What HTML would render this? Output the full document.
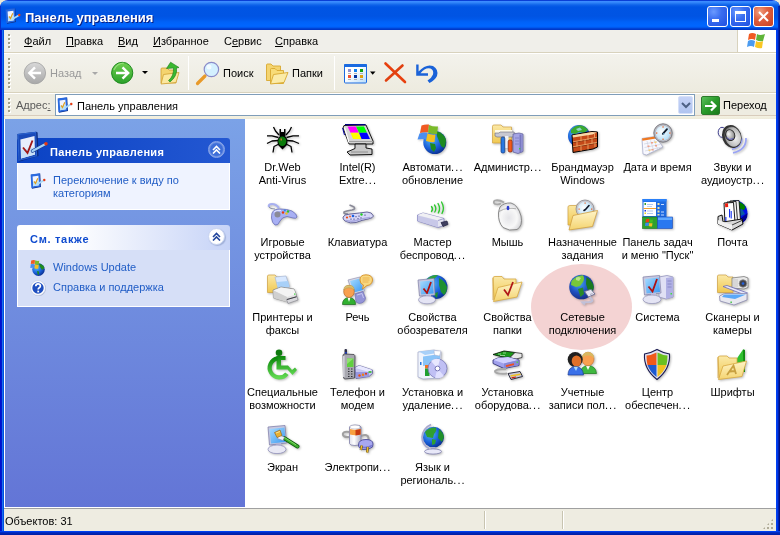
<!DOCTYPE html>
<html><head><meta charset="utf-8">
<style>
*{margin:0;padding:0;box-sizing:border-box}
html,body{width:780px;height:535px;overflow:hidden;background:#fff}
body{position:relative;font-family:"Liberation Sans",sans-serif;font-size:11px;color:#000;line-height:13px}
.a{position:absolute}
.txt{white-space:nowrap;will-change:transform}
.ic{filter:drop-shadow(1px 1px 0.8px rgba(0,0,0,0.28))}
.lab{will-change:transform;width:75px;text-align:center;white-space:nowrap;line-height:13px}
.u{text-decoration:underline}
.dots{letter-spacing:1.1px;margin-right:-1.1px}
#corner{left:0;top:0;width:780px;height:12px;background:#ECE9D8}
#frame{left:0;top:0;width:780px;height:535px;border-radius:8px 8px 0 0;
 background:linear-gradient(90deg,#0010D0 0,#0010D0 1px,#0018CC 1px,#0018CC 2px,#1A70F0 2px,#1A70F0 3px,#0050E0 3px,#0050E0 4px,#fff 4px,#fff 776px,#0040F0 776px,#0040F0 777px,#0038E8 777px,#0038E8 778px,#0020B0 778px,#0020B0 779px,#001080 779px)}
#title{left:0;top:0;width:780px;height:30px;border-radius:8px 8px 0 0;
 background:linear-gradient(180deg,#0A3FD6 0,#0A3FD6 1px,#3B8CFF 1px,#3A8BFF 2px,#2A7FF5 3px,#0E62EA 5px,#0055E4 7px,#0054E3 16px,#0058EA 19px,#0062F8 22px,#0066FF 26px,#0060F8 27px,#0050E4 28px,#0038C8 29px,#0038C8 30px)}
#ttext{will-change:transform;left:25px;top:10px;font-size:13px;font-weight:bold;color:#fff;text-shadow:1px 1px 0 #0A1E80;line-height:16px;white-space:nowrap}
.tb{top:6px;width:21px;height:21px;border:1px solid #fff;border-radius:3px;
 background:radial-gradient(circle at 30% 25%,#6A9AFF 0,#3A6EF0 40%,#1F4FE0 100%)}
#menubar{left:4px;top:30px;width:772px;height:23px;background:#F0EFEA;border-bottom:1px solid #D8D2BD}
#toolbar{left:4px;top:53px;width:772px;height:40px;background:linear-gradient(180deg,#F3F2EC,#EDEBDF);border-top:1px solid #fff;border-bottom:1px solid #D8D2BD}
#addrbar{left:4px;top:93px;width:772px;height:26px;background:linear-gradient(180deg,#fff 0,#fff 1px,#EEECE1 1px,#EEECE1 22px,#D8CCBC 22px,#D8CCBC 23px,#F4F1E2 23px,#EFECDA 26px)}
#content{left:4px;top:119px;width:772px;height:389px;background:#fff}
#leftpane{left:5px;top:119px;width:240px;height:388px;background:linear-gradient(180deg,#7BA2E7,#6375D6)}
#status{left:4px;top:508px;width:772px;height:23px;background:#EEECE1;border-top:1px solid #A0A0A0}
#bottom{left:0;top:531px;width:780px;height:4px;background:linear-gradient(180deg,#0040F0 0,#0040F0 1px,#0030D0 1px,#0020A8 3px)}
.grip{width:3px;background:linear-gradient(180deg,#A09E88 0,#A09E88 2px,transparent 2px) 0 0/2px 4px repeat-y,linear-gradient(180deg,#fff 0,#fff 2px,transparent 2px) 1px 1px/2px 4px repeat-y}
.sep{width:1px;background:#D5D0BC;border-right:1px solid #fff}
.box{left:17px;width:213px}
.hdr1{background:linear-gradient(90deg,#0A42C4,#2458D2);border-radius:3px 3px 0 0}
.body1{background:#EFF3FF;border:1px solid #fff;border-top:0}
.hdr2{background:linear-gradient(90deg,#fff 0,#fff 25%,#C6D3F7 100%);border-radius:3px 3px 0 0}
.body2{background:#D6DFF7;border:1px solid #fff;border-top:0}
.link{color:#215DC6;white-space:nowrap;will-change:transform}
.chev{width:17px;height:17px;border-radius:50%}
</style></head><body>
<svg width="0" height="0" style="position:absolute">
<defs>
<linearGradient id="gYel" x1="0" y1="0" x2="0" y2="1"><stop offset="0" stop-color="#FBE9A8"/><stop offset="1" stop-color="#F0C850"/></linearGradient>
<linearGradient id="gYel2" x1="0" y1="0" x2="0" y2="1"><stop offset="0" stop-color="#FFF4C8"/><stop offset="1" stop-color="#F4D470"/></linearGradient>
<radialGradient id="gGlobe" cx="0.35" cy="0.35" r="0.7"><stop offset="0" stop-color="#50B8F8"/><stop offset="0.6" stop-color="#1A5ED8"/><stop offset="1" stop-color="#0A3090"/></radialGradient>
<linearGradient id="gScreen" x1="0" y1="0" x2="1" y2="1"><stop offset="0" stop-color="#A8DCFF"/><stop offset="1" stop-color="#3A98F0"/></linearGradient>
<linearGradient id="gLav" x1="0" y1="0" x2="0" y2="1"><stop offset="0" stop-color="#E8E8FF"/><stop offset="1" stop-color="#9898E0"/></linearGradient>
<linearGradient id="gGray" x1="0" y1="0" x2="1" y2="1"><stop offset="0" stop-color="#F8F8F8"/><stop offset="1" stop-color="#B8B8C0"/></linearGradient>
<linearGradient id="gGreen" x1="0" y1="0" x2="0" y2="1"><stop offset="0" stop-color="#0E8A0E"/><stop offset="1" stop-color="#60D850"/></linearGradient>
<radialGradient id="gClock" cx="0.4" cy="0.4" r="0.6"><stop offset="0" stop-color="#FFFFFF"/><stop offset="1" stop-color="#B8E0F8"/></radialGradient>
<radialGradient id="gCone" cx="0.6" cy="0.6" r="0.6"><stop offset="0" stop-color="#F4F4F4"/><stop offset="0.8" stop-color="#B8B8B8"/><stop offset="1" stop-color="#787878"/></radialGradient>
<radialGradient id="gDome" cx="0.35" cy="0.35" r="0.7"><stop offset="0" stop-color="#F8F8F8"/><stop offset="1" stop-color="#8A8A8A"/></radialGradient>
<radialGradient id="gGlobe2" cx="0.4" cy="0.35" r="0.7"><stop offset="0" stop-color="#40A8F0"/><stop offset="0.55" stop-color="#2050C0"/><stop offset="1" stop-color="#182C80"/></radialGradient>
<linearGradient id="gBatt" x1="0" y1="0" x2="1" y2="0"><stop offset="0" stop-color="#E0E0EC"/><stop offset="0.4" stop-color="#FFFFFF"/><stop offset="1" stop-color="#B0B0C4"/></linearGradient>
<radialGradient id="gMouse" cx="0.45" cy="0.55" r="0.6"><stop offset="0" stop-color="#E4E4E8"/><stop offset="0.6" stop-color="#F8F8F8"/><stop offset="1" stop-color="#D0D0D4"/></radialGradient>
</defs></svg>
<div id="corner" class="a"></div>
<div id="frame" class="a"></div>
<div id="title" class="a"></div>
<div class="a" style="left:0;top:6px;width:1px;height:24px;background:#0A30C8"></div>
<div class="a" style="left:778px;top:6px;width:2px;height:24px;background:linear-gradient(90deg,#0030C8,#001A90)"></div>
<svg class="a" style="left:5px;top:8px;overflow:visible" width="16" height="16" viewBox="0 0 16 16">
<path d="M1 1.8 L10.2 0.5 L11 14 L2 15.8z" fill="#0A2A80"/>
<path d="M0.6 1.5 L9.8 0.3 L10.4 13.6 L1.4 15.2z" fill="#2A6AE0"/>
<path d="M2.6 3.6 L8.4 2.8 L8.9 12.2 L3.2 13.2z" fill="#F0F4FF"/>
<path d="M3 9 L8.8 8 L8.9 12.2 L3.2 13.2z" fill="#B8E0F8"/>
<path d="M4 8.3 L5.5 10.6 L7.8 5.2" stroke="#E0A020" stroke-width="1.2" fill="none"/>
<path d="M8.5 10.5 L14 7.2" stroke="#A8D8F8" stroke-width="1.8" stroke-linecap="round"/>
<circle cx="14.3" cy="7" r="1.2" fill="#E83A10"/>
</svg>
<div id="ttext" class="a">Панель управления</div>
<div class="a tb" style="left:707px"><div class="a" style="left:4px;top:12px;width:7px;height:3px;background:#fff"></div></div>
<div class="a tb" style="left:730px"><div class="a" style="left:4px;top:4px;width:11px;height:11px;border:1px solid #fff;border-top-width:3px"></div></div>
<div class="a tb" style="left:753px;background:radial-gradient(circle at 30% 25%,#F0A080 0,#E06040 40%,#C84020 100%)">
 <svg class="a" style="left:4px;top:4px" width="11" height="11" viewBox="0 0 11 11"><path d="M1 1 L10 10 M10 1 L1 10" stroke="#fff" stroke-width="2"/></svg></div>

<div id="menubar" class="a"></div>
<div class="a grip" style="left:8px;top:34px;height:15px"></div>
<div class="a txt" style="left:24px;top:35px"><span class="u">Ф</span>айл</div>
<div class="a txt" style="left:66px;top:35px"><span class="u">П</span>равка</div>
<div class="a txt" style="left:118px;top:35px"><span class="u">В</span>ид</div>
<div class="a txt" style="left:153px;top:35px"><span class="u">И</span>збранное</div>
<div class="a txt" style="left:224px;top:35px">С<span class="u">е</span>рвис</div>
<div class="a txt" style="left:275px;top:35px"><span class="u">С</span>правка</div>
<div class="a" style="left:737px;top:30px;width:39px;height:22px;background:#fff;border-left:1px solid #D8D2BD"></div>
<svg class="a" style="left:746px;top:32px" width="22" height="18" viewBox="0 0 22 18">
<path d="M3 2 Q6 0 10 2 L9 8 Q6 6 2 8z" fill="#F05A22"/><path d="M11 2 Q14 4 19 2 L17 9 Q14 10 10 8z" fill="#5FB43A"/>
<path d="M2 9 Q5 7 9 9 L8 15 Q5 13 1 15z" fill="#4A9BF0"/><path d="M10 9 Q13 11 17 9 L16 16 Q13 17 9 15z" fill="#F9C623"/></svg>

<div id="toolbar" class="a"></div>
<div class="a grip" style="left:8px;top:58px;height:31px"></div>
<svg class="a" style="left:20px;top:58px" width="30" height="30" viewBox="20 58 30 30">
<defs><linearGradient id="gBack" x1="0" y1="0" x2="0" y2="1"><stop offset="0" stop-color="#D8D8D8"/><stop offset="1" stop-color="#A8A8A8"/></linearGradient>
<linearGradient id="gFwd" x1="0" y1="0" x2="0" y2="1"><stop offset="0" stop-color="#70D050"/><stop offset="1" stop-color="#2AA02A"/></linearGradient></defs>
<circle cx="34.9" cy="73.1" r="10.7" fill="url(#gBack)" stroke="#A0A0A0" stroke-width="0.8"/>
<path d="M41 73 H29.5 M35 67.3 L29.3 73 L35 78.7" stroke="#fff" stroke-width="2.4" fill="none" stroke-linejoin="miter"/></svg>
<div class="a txt" style="left:50px;top:67px;color:#9A9A9A">Назад</div>
<div class="a" style="left:92px;top:72px;width:0;height:0;border-left:3px solid transparent;border-right:3px solid transparent;border-top:3px solid #A8A8A8"></div>
<svg class="a" style="left:108px;top:58px" width="30" height="30" viewBox="108 58 30 30">
<circle cx="122.2" cy="72.9" r="10.6" fill="url(#gFwd)" stroke="#1E8A1E" stroke-width="1"/>
<path d="M114 70 Q117 63 124 63" stroke="#A8E890" stroke-width="1.2" fill="none" opacity="0.7"/>
<path d="M116 73 H128 M122.5 67.3 L128.2 73 L122.5 78.7" stroke="#fff" stroke-width="2.4" fill="none"/></svg>
<div class="a" style="left:142px;top:71px;width:0;height:0;border-left:3px solid transparent;border-right:3px solid transparent;border-top:3px solid #000"></div>
<svg class="a" style="left:156px;top:58px" width="30" height="30" viewBox="156 58 30 30">
<path d="M161 69 Q161 68 162 68 H167 L169 70 H176 V83 H161z" fill="#F4D470" stroke="#D0A030" stroke-width="0.8"/>
<path d="M163.5 74.5 L179 72.5 L176 82.5 L161 84z" fill="#FBE8A0" stroke="#D0A030" stroke-width="0.8"/>
<path d="M168.5 80.5 Q174 76 173.5 68 L166.5 68.5 L170.6 62.2 L179 67.5 L176.5 68 Q177.5 76 170 82z" fill="#3AB830" stroke="#1A7A1A" stroke-width="0.6"/></svg>
<div class="a sep" style="left:188px;top:56px;height:34px"></div>
<svg class="a" style="left:194px;top:58px" width="30" height="30" viewBox="194 58 30 30">
<path d="M197.5 83.5 L205 76" stroke="#E89A2A" stroke-width="3.2" stroke-linecap="round"/>
<circle cx="211.4" cy="69.5" r="7.2" fill="#D4F0FF" stroke="#8A8AC8" stroke-width="1.2"/>
<circle cx="209" cy="67" r="2.5" fill="#fff" opacity="0.7"/></svg>
<div class="a txt" style="left:223px;top:67px">Поиск</div>
<svg class="a" style="left:262px;top:58px" width="30" height="30" viewBox="262 58 30 30">
<path d="M266.5 65 Q266.5 64 267.5 64 H271 L273 66 H280.5 V80.5 H266.5z" fill="#F4D470" stroke="#D8A830" stroke-width="0.9"/>
<path d="M270.5 69.5 Q270.5 68.5 271.5 68.5 H275 L277 70.5 H283.5 V83.5 H270.5z" fill="#F8DC78" stroke="#D8A830" stroke-width="0.9"/>
<path d="M273.5 74.5 L288 72.5 L284 82.5 L270.5 84z" fill="#FBEBA8" stroke="#D8A830" stroke-width="0.9"/></svg>
<div class="a txt" style="left:292px;top:67px">Папки</div>
<div class="a sep" style="left:334px;top:56px;height:34px"></div>
<svg class="a" style="left:340px;top:58px" width="40" height="30" viewBox="340 58 40 30">
<defs><linearGradient id="gView" x1="0" y1="0" x2="1" y2="1"><stop offset="0.4" stop-color="#fff"/><stop offset="1" stop-color="#B8DCFA"/></linearGradient></defs>
<rect x="344.5" y="64.5" width="22" height="18.5" rx="1" fill="url(#gView)" stroke="#1A6AE0" stroke-width="1"/>
<rect x="344" y="64" width="23" height="3" rx="1" fill="#1A6AE0"/>
<rect x="348" y="69" width="3" height="3" fill="#9090D0"/><rect x="354" y="69" width="3" height="3" fill="#1080F0"/><rect x="360" y="69" width="3" height="3" fill="#10A010"/>
<rect x="348" y="75" width="3" height="3" fill="#F05030"/><rect x="354" y="75" width="3" height="3" fill="#0030A0"/><rect x="360" y="75" width="3" height="3" fill="#E0A010"/>
<path d="M348 73.5 h3 M354 73.5 h3 M360 73.5 h3 M348 79.5 h3 M354 79.5 h3 M360 79.5 h3" stroke="#A0A0A0" stroke-width="0.8"/>
<path d="M370 71.5 H375.5 L372.7 74.8z" fill="#000"/></svg>
<svg class="a" style="left:380px;top:58px" width="60" height="30" viewBox="380 58 60 30">
<path d="M385.5 63.5 L405 82" stroke="#E8400E" stroke-width="2.6" stroke-linecap="round"/>
<path d="M402.5 65.5 L386 80.5" stroke="#E04010" stroke-width="2.6" stroke-linecap="round"/>
<path d="M416.2 64.5 L418.6 64.5 L418.6 71.5 Q426 63.5 433 66 Q439 69.5 437 76 Q435 80 429.5 83 L427.5 80.5 Q432 77.5 433 74.5 Q434 70 430.5 68.5 Q425.5 67 420.5 73.2 L428 73.2 L428 75.8 L416.2 75.8z" fill="#1A62D8"/></svg>

<div id="addrbar" class="a"></div>
<div class="a grip" style="left:8px;top:98px;height:15px"></div>
<div class="a txt" style="left:16px;top:99px;color:#5A5A5A">Адрес<span class="u">:</span></div>
<div class="a" style="left:55px;top:94px;width:640px;height:22px;background:#fff;border:1px solid #7F9DB9"></div>
<svg class="a" style="left:57px;top:97px;overflow:visible" width="16" height="16" viewBox="0 0 16 16">
<path d="M1 1.8 L10.2 0.5 L11 14 L2 15.8z" fill="#0A2A80"/>
<path d="M0.6 1.5 L9.8 0.3 L10.4 13.6 L1.4 15.2z" fill="#2A6AE0"/>
<path d="M2.6 3.6 L8.4 2.8 L8.9 12.2 L3.2 13.2z" fill="#F0F4FF"/>
<path d="M3 9 L8.8 8 L8.9 12.2 L3.2 13.2z" fill="#B8E0F8"/>
<path d="M4 8.3 L5.5 10.6 L7.8 5.2" stroke="#E0A020" stroke-width="1.2" fill="none"/>
<path d="M8.5 10.5 L14 7.2" stroke="#A8D8F8" stroke-width="1.8" stroke-linecap="round"/>
<circle cx="14.3" cy="7" r="1.2" fill="#E83A10"/>
</svg>
<div class="a txt" style="left:77px;top:100px">Панель управления</div>
<div class="a" style="left:678px;top:96px;width:15px;height:18px;border-radius:2px;background:linear-gradient(180deg,#C6D3F7,#B0C4F0);border:1px solid #D6E0F8">
<svg class="a" style="left:2px;top:5px" width="10" height="7" viewBox="0 0 10 7"><path d="M1 1 L5 5 L9 1" stroke="#4D6185" stroke-width="2" fill="none"/></svg></div>
<div class="a" style="left:701px;top:96px;width:19px;height:19px;border-radius:2px;background:linear-gradient(135deg,#5ABF5A,#2A9A2A 50%,#1A7A1A);border:1px solid #2A7A2A">
<svg class="a" style="left:2px;top:2px" width="14" height="14" viewBox="0 0 14 14"><path d="M1 7 H11 M7 2.5 L11.5 7 L7 11.5" stroke="#fff" stroke-width="2.2" fill="none"/></svg></div>
<div class="a txt" style="left:723px;top:99px">Переход</div>

<div id="content" class="a"></div>
<div id="leftpane" class="a"></div>

<div class="a box hdr1" style="top:138px;height:25px"></div>
<div class="a box body1" style="top:163px;height:47px"></div>
<svg class="a" style="left:14px;top:128px;overflow:visible" width="36" height="36" viewBox="0 0 36 36">
<path d="M3.4 6 L22.2 3.7 L23.6 4.5 L24.5 28 L5.5 33.5 L4.4 33z" fill="#0A2A80"/>
<path d="M3.4 6 L22.2 3.7 L23.2 28.3 L4.4 33z" fill="#2A62D0"/>
<path d="M4.5 7 L21.5 5 L22.2 27.5 L5.3 31.8z" fill="#1A4AB8"/>
<path d="M6.4 11.4 L20.5 8 L21 26.5 L7 30.5z" fill="#E8EEFC"/>
<path d="M7 22 L21 19 L21 26.5 L7 30.5z" fill="#C8E0F8"/>
<path d="M9 19.5 L13.5 25 L18.5 12.5" stroke="#A01818" stroke-width="1.9" fill="none"/>
<path d="M18.5 23 L31.5 16" stroke="#1A3A90" stroke-width="3.6" stroke-linecap="round"/>
<path d="M18.5 23 L31.5 16" stroke="#A0D0F8" stroke-width="2.2" stroke-linecap="round"/>
<circle cx="32" cy="15.7" r="1.8" fill="#E83A10"/>
</svg>
<div class="a txt" style="left:50px;top:146px;color:#fff;font-weight:bold;letter-spacing:0.33px">Панель управления</div>
<div class="a chev" style="left:208px;top:141px;background:radial-gradient(circle,#3E6ED8 55%,#7A9BE8 70%,#5A7ED8 100%);border:1px solid #8AA6E8">
<svg class="a" style="left:3px;top:3px" width="9" height="9" viewBox="0 0 9 9"><path d="M1 5 L4.5 1.5 L8 5 M1 8.5 L4.5 5 L8 8.5" stroke="#fff" stroke-width="1.6" fill="none"/></svg></div>
<svg class="a" style="left:30px;top:173px;overflow:visible" width="16" height="16" viewBox="0 0 16 16">
<path d="M1 1.8 L10.2 0.5 L11 14 L2 15.8z" fill="#0A2A80"/>
<path d="M0.6 1.5 L9.8 0.3 L10.4 13.6 L1.4 15.2z" fill="#2A6AE0"/>
<path d="M2.6 3.6 L8.4 2.8 L8.9 12.2 L3.2 13.2z" fill="#F0F4FF"/>
<path d="M3 9 L8.8 8 L8.9 12.2 L3.2 13.2z" fill="#B8E0F8"/>
<path d="M4 8.3 L5.5 10.6 L7.8 5.2" stroke="#E0A020" stroke-width="1.2" fill="none"/>
<path d="M8.5 10.5 L14 7.2" stroke="#A8D8F8" stroke-width="1.8" stroke-linecap="round"/>
<circle cx="14.3" cy="7" r="1.2" fill="#E83A10"/>
</svg>
<div class="a link" style="left:53px;top:174px">Переключение к виду по<br>категориям</div>

<div class="a box hdr2" style="top:225px;height:25px"></div>
<div class="a box body2" style="top:250px;height:57px"></div>
<div class="a txt" style="left:30px;top:233px;color:#0F4BCF;font-weight:bold;letter-spacing:0.7px">См. также</div>
<div class="a chev" style="left:208px;top:228px;background:#fff;border:1px solid #C8D4F0;box-shadow:1px 1px 1px #A0B0D8">
<svg class="a" style="left:3px;top:3px" width="9" height="9" viewBox="0 0 9 9"><path d="M1 5 L4.5 1.5 L8 5 M1 8.5 L4.5 5 L8 8.5" stroke="#21449C" stroke-width="1.6" fill="none"/></svg></div>
<svg class="a" style="left:30px;top:259px" width="17" height="18" viewBox="0 0 17 18">
<circle cx="8.5" cy="10.6" r="6.3" fill="url(#gGlobe)"/>
<path d="M9 4.6 Q13 5.5 14.5 9 L12 11 L10 8z" fill="#1E8A20"/><path d="M7 12 L9 12.5 L9 16 L7.5 15z" fill="#1E8A20"/>
<path d="M1.2 1.5 Q3 0.8 5 1.2 L4.6 5 Q2.8 4.6 0.8 5z" fill="#F05A22"/><path d="M5.2 1.3 Q7 2.2 9.2 1.8 L8.8 5.6 Q6.7 6 4.8 5.2z" fill="#7ABB2A"/>
<path d="M0.7 5.3 Q2.8 4.9 4.6 5.3 L4.2 9 Q2.4 8.6 0.3 9z" fill="#4A8EF0"/><path d="M4.8 5.5 Q6.7 6.2 8.7 5.9 L8.3 9.7 Q6.3 10 4.4 9.2z" fill="#F4C020"/></svg>
<div class="a link" style="left:53px;top:261px">Windows Update</div>
<svg class="a" style="left:30px;top:280px" width="17" height="17" viewBox="0 0 17 17">
<circle cx="8.6" cy="8.6" r="7.4" fill="#8090B0" opacity="0.5"/>
<circle cx="8" cy="8" r="7.4" fill="#fff" stroke="#C0C8E0" stroke-width="0.6"/>
<circle cx="8" cy="8" r="5.7" fill="#1E4EC0"/>
<path d="M5.8 6.2 Q5.8 3.8 8 3.8 Q10.4 3.8 10.4 6 Q10.4 7.3 9 8 Q8.2 8.5 8.2 9.5" stroke="#fff" stroke-width="1.7" fill="none"/>
<rect x="7.3" y="10.6" width="1.8" height="1.8" fill="#fff"/></svg>
<div class="a link" style="left:53px;top:281px">Справка и поддержка</div>

<div class="a" style="left:531px;top:264px;width:101px;height:86px;border-radius:50%;background:#F4D3D3"></div>
<svg class="a ic" style="left:267px;top:124px;overflow:visible" width="32" height="32" viewBox="0 0 32 32">
<g stroke="#000" stroke-width="1.3" fill="none" stroke-linejoin="round">
<path d="M12 11 L8.5 7 L6.5 3"/><path d="M19 11 L22.5 7 L24.5 3"/>
<path d="M11.5 13.5 L5 11.8 L0 11.8"/><path d="M19.5 13.5 L26 11.8 L32 11.8"/>
<path d="M11.5 16.5 L5 17 L0 19.5"/><path d="M19.5 16.5 L26 17 L32 19.5"/>
<path d="M12 20 L7 22.5 L6 28.5"/><path d="M19 20 L24 22.5 L25 28.5"/>
</g>
<path d="M12.5 5 h1.5 v3 h3 v-3 h1.5 v7.5 h-6z" fill="#000"/>
<path d="M15.5 11.5 Q20.5 12 20.5 18 L20 21 L15.5 25.5 L11 21 L10.5 18 Q10.5 12 15.5 11.5z" fill="#000"/>
<ellipse cx="15.3" cy="17.3" rx="4" ry="4.8" fill="#0A7A0A"/>
<rect x="13.5" y="14.5" width="1.5" height="2" fill="#C07030"/>
</svg>
<div class="a lab" style="left:245px;top:161px">Dr.Web<br>Anti-Virus</div>
<svg class="a ic" style="left:342px;top:124px;overflow:visible" width="32" height="32" viewBox="0 0 32 32">
<path d="M2 1.5 L24 1 L31 17 L31 20 L7 20 L1 4z" fill="#D4D4D4" stroke="#000" stroke-width="0.9"/>
<path d="M3 0.6 H23.5" stroke="#000080" stroke-width="1.2"/>
<path d="M0.6 4 L2.5 11" stroke="#0000A0" stroke-width="1"/>
<path d="M2.5 3.5 L7 18.5" stroke="#fff" stroke-width="1.2"/>
<path d="M5.5 2.5 L14 2.5 L17 8.7 L8.5 8.7z" fill="#FF00FF"/>
<path d="M14 2.5 L22 2.5 L25 8.7 L17 8.7z" fill="#00FF00"/>
<path d="M8.5 8.7 L17 8.7 L19.5 15 L11 15z" fill="#FFFF00"/>
<path d="M17 8.7 L25 8.7 L28 15 L19.5 15z" fill="#0000FF"/>
<path d="M7 17.5 H31" stroke="#A0A0A0" stroke-width="1"/>
<path d="M13 20 L24 20 L24 24 L30 25 L30 30.5 L8 31 L5 28 L13 24.5z" fill="#C8C8C8" stroke="#000" stroke-width="0.9"/>
<path d="M9 28 H26" stroke="#808080" stroke-width="0.8"/>
</svg>
<div class="a lab" style="left:320px;top:161px">Intel(R)<br>Extre<span class="dots">...</span></div>
<svg class="a ic" style="left:417px;top:124px;overflow:visible" width="32" height="32" viewBox="0 0 32 32">
<circle cx="17.8" cy="18.5" r="11.5" fill="url(#gGlobe)"/>
<path d="M20 7.5 Q27 9 29 16 Q29 21 27 24 L24 22 L22 17 L20 12z" fill="#1E8A20"/>
<path d="M13 19 L18 20 L19 24 L17 28 L14 25z" fill="#1E8A20"/>
<path d="M4.5 1.5 Q8 0 12 0.5 L11 8.3 Q7 7.8 3 9z" fill="#F05A22"/>
<path d="M12 1 Q16 3 21 2.5 L20 10 Q15 10.5 11 8.5z" fill="#7ABB2A"/>
<path d="M2.5 9.5 Q6 8 10.5 8.8 L9.5 15.5 Q5 14.5 0.5 15.5z" fill="#4A8EF0"/>
<path d="M10.5 9.5 Q14 11 18.5 10.5 L17.5 18 Q13 18.5 9 17z" fill="#F4C020"/>
</svg>
<div class="a lab" style="left:395px;top:161px">Автомати<span class="dots">...</span><br>обновление</div>
<svg class="a ic" style="left:492px;top:124px;overflow:visible" width="32" height="32" viewBox="0 0 32 32">
<path d="M0.5 2.2 Q0.5 1 2 1 H9 L11 3 H19.5 V19 H0.5z" fill="url(#gYel)" stroke="#D0A040" stroke-width="0.7"/>
<rect x="3" y="6" width="17" height="3" fill="#FFFBE8"/>
<path d="M3 9 H7 L8 8 H22 L23 10 L21 13 H5 L3 12z" fill="#C8C8D0" stroke="#6A6A78" stroke-width="0.6"/>
<rect x="13" y="12" width="3.5" height="12" fill="#EEF0F8"/>
<rect x="9" y="13" width="3.8" height="16" rx="1.6" fill="#2A78E0" stroke="#183A80" stroke-width="0.7"/>
<rect x="16.2" y="16" width="4" height="12" rx="1.6" fill="#F05A1A" stroke="#802010" stroke-width="0.7"/>
<path d="M21 10 L27 9 L31 10 V27.5 L26 29.5 L21 28z" fill="#A4A4E4" stroke="#5A5A98" stroke-width="0.7"/>
<path d="M28.5 10.5 V28.5" stroke="#7878C0" stroke-width="2"/>
<path d="M23 14 h4 M23 17 h4 M23 20 h4" stroke="#7A7AC0" stroke-width="0.8"/>
<rect x="27" y="24" width="1.4" height="1.4" fill="#40D040"/>
</svg>
<div class="a lab" style="left:470px;top:161px">Администр<span class="dots">...</span></div>
<svg class="a ic" style="left:567px;top:124px;overflow:visible" width="32" height="32" viewBox="0 0 32 32">
<circle cx="12" cy="12" r="11" fill="url(#gGlobe)"/>
<path d="M4 6 Q8 1.5 13 1.2 Q18 2 21 6 L17 9 L12 8 L8 10 L4 9z" fill="#3AAA30"/>
<path d="M9 5 L13 3.5 L15 6 L11 7z" fill="#A8E0F0" opacity="0.8"/>
<path d="M5 11 L25 7.5 L30.5 8 L30.5 23 L26 25 L6 28.5z" fill="#C44818" stroke="#000" stroke-width="1"/>
<path d="M5.5 11.3 L25 8 L30 8.5 L25.5 10.5 L6 13.5z" fill="#F8D8A8"/>
<g stroke="#1A0A00" stroke-width="0.8" fill="none" opacity="0.55">
<path d="M6 18.5 L25 15 L30 14"/><path d="M6 23.5 L25 20 L30 19"/></g>
<g stroke="#F4B070" stroke-width="0.8" fill="none">
<path d="M6 17.8 L25 14.3 L30 13.3"/><path d="M6 22.8 L25 19.3 L30 18.3"/>
<path d="M14 12.3 v5 M21 11 v5 M10 17.5 v5 M18 16 v5 M25 14.5 v5 M14 22 v5 M21 20.5 v5 M27.5 9.5 v4 M28 19 v4"/></g>
</svg>
<div class="a lab" style="left:545px;top:161px">Брандмауэр<br>Windows</div>
<svg class="a ic" style="left:642px;top:124px;overflow:visible" width="32" height="32" viewBox="0 0 32 32">
<path d="M0 14.5 L13 12.5 L21 23 L4.5 31 L1 30z" fill="#F8F8FE" stroke="#A0A8C8" stroke-width="0.7"/>
<path d="M0 14.5 L13 12.5 L14 14.5 L0.5 16.8z" fill="#F07820"/>
<g stroke="#C8CCDC" stroke-width="0.6" fill="none">
<path d="M2 20 L15.5 17.5 M2.5 23.5 L18 20.5 M3 27 L19.5 23"/>
<path d="M5 17 L8 29.5 M8.5 16.3 L12 27.8 M12 15.8 L16 26"/></g>
<g fill="#F0A088"><rect x="9" y="18" width="2" height="1.5"/><rect x="5.5" y="21.5" width="2" height="1.5"/><rect x="13" y="21" width="2" height="1.5"/><rect x="9.5" y="25" width="2" height="1.5"/></g>
<g fill="#F8D070"><rect x="12.5" y="17.5" width="2" height="1.5"/><rect x="6.5" y="25.5" width="2" height="1.5"/></g>
<circle cx="21" cy="9" r="9.2" fill="#B8B8C0" stroke="#707078" stroke-width="0.9"/>
<circle cx="21" cy="9" r="7.3" fill="url(#gClock)"/>
<path d="M20.8 9.8 L25 5.2" stroke="#101828" stroke-width="1.8" stroke-linecap="round"/>
<path d="M21 9.5 L22.5 10" stroke="#4A90C0" stroke-width="1.2"/>
<g fill="#F06020"><rect x="20.4" y="2.3" width="1.3" height="1.3"/><rect x="27.2" y="8.4" width="1.3" height="1.3"/><rect x="20.4" y="14.6" width="1.3" height="1.3"/><rect x="14" y="8.4" width="1.3" height="1.3"/></g>
</svg>
<div class="a lab" style="left:620px;top:161px">Дата и время</div>
<svg class="a ic" style="left:717px;top:124px;overflow:visible" width="32" height="32" viewBox="0 0 32 32">
<path d="M25 14.5 Q25 22 15 25.5" stroke="#9AA4F4" stroke-width="1.7" fill="none"/>
<path d="M29 14 Q29.5 26 16 28.8" stroke="#9AA4F4" stroke-width="1.7" fill="none"/>
<ellipse cx="5" cy="8.3" rx="3.8" ry="5" fill="#F4F4F8" stroke="#2A2A80" stroke-width="0.9"/>
<ellipse cx="14.8" cy="12.5" rx="9.6" ry="11.6" transform="rotate(-20 14.8 12.5)" fill="#333"/>
<ellipse cx="15.8" cy="12.7" rx="8" ry="10.2" transform="rotate(-20 15.8 12.7)" fill="url(#gCone)"/>
<ellipse cx="13.2" cy="11.2" rx="5" ry="6" transform="rotate(-20 13.2 11.2)" fill="#2A2A2A"/>
<ellipse cx="13.3" cy="11" rx="4" ry="5" transform="rotate(-20 13.3 11)" fill="url(#gDome)"/>
<path d="M9.5 13.5 Q12 17 16.5 14.5" stroke="#5A5AC8" stroke-width="0.9" fill="none"/>
</svg>
<div class="a lab" style="left:695px;top:161px">Звуки и<br>аудиоустр<span class="dots">...</span></div>
<svg class="a ic" style="left:267px;top:199px;overflow:visible" width="32" height="32" viewBox="0 0 32 32">
<path d="M2 8 Q1 5 5 5 Q9 5 12 9" stroke="#A8B0F0" stroke-width="2.2" fill="none"/>
<path d="M2 8 Q3 10 8 10" stroke="#707890" stroke-width="0.8" fill="none"/>
<path d="M5 14 Q7 9.5 14 10 Q20 10 25 12 Q30 15 30 18 Q29 20 26 19 L20 17.5 Q15 18 13 22 Q11 27 8 26 Q5 24 4.5 19 Q4.5 16 5 14z" fill="#A8B0F4" stroke="#6A70B8" stroke-width="0.8"/>
<path d="M7 13 Q10 11 14 11.5" stroke="#E0E4FF" stroke-width="1.2" fill="none"/>
<circle cx="10.5" cy="15.5" r="3" fill="#8A8A98"/>
<circle cx="16" cy="13.5" r="1.2" fill="#E83A10"/><circle cx="17.8" cy="11.5" r="1.1" fill="#2A8AF0"/><circle cx="21" cy="12.5" r="1.2" fill="#30C030"/><circle cx="19.5" cy="14.5" r="1.2" fill="#F0C020"/>
</svg>
<div class="a lab" style="left:245px;top:236px">Игровые<br>устройства</div>
<svg class="a ic" style="left:342px;top:199px;overflow:visible" width="32" height="32" viewBox="0 0 32 32">
<path d="M7.5 6 Q10 7 12 8 Q14 10 10 11 Q4 12 2 13 Q1 15 6 15" stroke="#8A8A98" stroke-width="1.6" fill="none"/>
<path d="M1 18 Q2 15.5 8 15 Q18 14 25 13 Q30 13 31.5 17 Q31 19 26 20 Q20 21 14 23.5 Q8 25 3 22 Q0.5 20 1 18z" fill="#D8D8F8" stroke="#5A5A90" stroke-width="0.9"/>
<path d="M4 21.5 Q10 23 16 21 Q22 19 28 18.5" stroke="#A8A8E0" stroke-width="1.5" fill="none"/>
<g fill="#9090C0"><rect x="13" y="17" width="2" height="1.3"/><rect x="16" y="16.5" width="2" height="1.3"/><rect x="22" y="15.5" width="2" height="1.3"/><rect x="8" y="19.5" width="2" height="1.3"/><rect x="11" y="19.5" width="2" height="1.3"/><rect x="15" y="19" width="2" height="1.3"/><rect x="18" y="18.3" width="2" height="1.3"/></g>
<circle cx="5" cy="18.5" r="1.1" fill="#F04A10"/><circle cx="8" cy="17.5" r="1.1" fill="#F07040"/><circle cx="11" cy="17" r="1.3" fill="#1A60E0"/><circle cx="19.5" cy="15.5" r="1.2" fill="#20D020"/>
</svg>
<div class="a lab" style="left:320px;top:236px">Клавиатура</div>
<svg class="a ic" style="left:417px;top:199px;overflow:visible" width="32" height="32" viewBox="0 0 32 32">
<g stroke="#30C830" stroke-width="1.4" fill="none" stroke-linecap="round">
<path d="M14.5 7.5 Q16.5 10 14.5 12.5"/><path d="M17.5 6 Q20 9.5 17.8 13"/><path d="M21 4.5 Q24 9.5 21.3 14"/><path d="M24.5 3 Q28 9 25 14.5"/></g>
<path d="M0.5 16 L6 14 L27 19.5 L27 26.5 L21 28.5 L0.5 22z" fill="#E4E4F0" stroke="#8080C0" stroke-width="0.8"/>
<path d="M0.8 16 L6 14 L27 19.5 L21 21.5z" fill="#F0F0F4"/>
<path d="M0.8 16.5 L21 21.5 V28.2 L0.8 22z" fill="#C8C8E8"/>
<path d="M21 21.5 L27 19.5" stroke="#8080C0" stroke-width="0.7"/>
<path d="M24 23.5 L30 22 L31 25.5 L26 27.5z" fill="#404060" stroke="#202040" stroke-width="0.7"/>
</svg>
<div class="a lab" style="left:395px;top:236px">Мастер<br>беспровод<span class="dots">...</span></div>
<svg class="a ic" style="left:492px;top:199px;overflow:visible" width="32" height="32" viewBox="0 0 32 32">
<path d="M12 3.5 Q7 0.5 3 1.5 Q0.5 3 3 5 Q6 6 9 4.5" stroke="#A8A8A8" stroke-width="1.8" fill="none"/>
<path d="M8 8 Q12 3.5 19 4 Q26 6 29 17 Q31 27 25 30.5 Q17 32.5 11 28.5 Q6 23 6.5 14 Q7 10.5 8 8z" fill="url(#gMouse)" stroke="#808080" stroke-width="0.9"/>
<path d="M7 12.5 Q12 9.5 16 9.5 Q20 9 24 9.8" stroke="#A0A0A0" stroke-width="0.8" fill="none"/>
<ellipse cx="16" cy="9" rx="1.4" ry="2.3" fill="#2A3ACC"/>
</svg>
<div class="a lab" style="left:470px;top:236px">Мышь</div>
<svg class="a ic" style="left:567px;top:199px;overflow:visible" width="32" height="32" viewBox="0 0 32 32">
<path d="M1 8 Q1 6.5 3 6.5 H9 L11 5 H14 V26 H1z" fill="url(#gYel)" stroke="#D0A040" stroke-width="0.7"/>
<circle cx="18" cy="10" r="9" fill="#C8C8D0" stroke="#8A8A90" stroke-width="0.8"/>
<circle cx="18" cy="10" r="7.2" fill="url(#gClock)"/>
<path d="M18.5 10.5 L22 6.5 M18.5 10.5 L17 11.5" stroke="#101828" stroke-width="1.6" stroke-linecap="round"/>
<g fill="#F06020"><rect x="17.5" y="3.5" width="1.2" height="1.2"/><rect x="24" y="9.5" width="1.2" height="1.2"/><rect x="11.5" y="9.5" width="1.2" height="1.2"/></g>
<path d="M6 16.5 L30.5 11.5 L25.5 27.5 L2 31z" fill="url(#gYel2)" stroke="#D0A040" stroke-width="0.8"/>
</svg>
<div class="a lab" style="left:545px;top:236px">Назначенные<br>задания</div>
<svg class="a ic" style="left:642px;top:199px;overflow:visible" width="32" height="32" viewBox="0 0 32 32">
<rect x="0.5" y="0" width="24" height="18.5" fill="#1E6AE0"/>
<rect x="0.5" y="0" width="24" height="2.5" fill="#2A80F8"/>
<rect x="1.5" y="3" width="12.5" height="14" fill="#FFFFFF"/>
<rect x="1.5" y="9" width="12.5" height="1" fill="#F0A030"/>
<g fill="#B0C8F0"><rect x="5" y="5" width="6" height="1"/><rect x="5" y="7" width="5" height="0.8"/><rect x="5" y="11.5" width="6" height="1"/><rect x="5" y="14" width="6" height="1"/></g>
<rect x="2.5" y="4" width="1.5" height="2" fill="#30A030"/><rect x="2.5" y="11" width="1.5" height="1.5" fill="#1A30E0"/><rect x="2.5" y="13.5" width="1.5" height="1.5" fill="#F0D020"/>
<g fill="#F0E0A0"><rect x="15.5" y="4" width="2" height="2"/><rect x="15.5" y="8" width="2" height="2"/><rect x="15.5" y="11.5" width="2" height="2"/><rect x="15.5" y="15" width="2" height="1.5"/></g>
<g fill="#C8DCFF"><rect x="19" y="5" width="3" height="1"/><rect x="19" y="12.5" width="3" height="1"/><rect x="19" y="15.5" width="3" height="1"/></g>
<rect x="0.5" y="18" width="15" height="11.5" fill="#2EA02E" stroke="#1A701A" stroke-width="0.6"/>
<path d="M4 20.5 Q5.5 19.5 7.5 20 L7 23.3 Q5 23 3.5 23.5z" fill="#F03A10"/>
<path d="M7.8 20 Q9.5 21 11 20.5 L10.5 23.8 Q9 24 7.3 23.4z" fill="#40C020"/>
<path d="M3.4 24 Q5 23.5 7 23.8 L6.5 27 Q4.5 26.5 3 27z" fill="#3A8AF0"/>
<path d="M7.2 24 Q9 24.5 10.5 24.2 L10 27.5 Q8.5 27.5 6.7 27z" fill="#F4C020"/>
<rect x="15.5" y="18" width="15" height="11.5" fill="#2A78F0" stroke="#1A4AB8" stroke-width="0.6"/>
<rect x="16" y="18.5" width="14" height="2.5" fill="#60A8FF"/>
</svg>
<div class="a lab" style="left:620px;top:236px">Панель задач<br>и меню &quot;Пуск&quot;</div>
<svg class="a ic" style="left:717px;top:199px;overflow:visible" width="32" height="32" viewBox="0 0 32 32">
<path d="M16 1.5 A12 12 0 0 1 20 26 L16 26z" fill="#0010E8"/>
<path d="M16 1.5 Q25 2 28.5 8 L27 11 L21 10 L18 6z" fill="#008000"/>
<path d="M22 11 L25 10 L28 15 L24 17z" fill="#0A5AA0"/>
<path d="M23 20 Q28 16 30.5 14 Q31 22 23 25z" fill="#000090"/>
<path d="M13 2 L22 1.5 L23.5 21 L14 22z" fill="#F0F0F0" stroke="#000" stroke-width="0.8"/>
<path d="M10 3 L19 2.5 L20.5 22 L11 23z" fill="#F8F8F8" stroke="#000" stroke-width="0.8"/>
<path d="M7 4 L16.5 3.5 L18 23 L8 24z" fill="#fff" stroke="#000" stroke-width="0.9"/>
<path d="M8 4.5 L11 4.3 L11.2 8 L8.2 8.3z" fill="#F02010"/>
<path d="M12.6 10 V18.5 M14.2 12 V19.5 M8.9 18 V23" stroke="#0020F0" stroke-width="1"/>
<path d="M1 17.5 L5 16 L6 23 L25 20 L26 25 L15 31 L1 25z" fill="#D8D8D8" stroke="#000" stroke-width="0.9"/>
<path d="M1 25 L15 31 L15 26 L1 21z" fill="#F0F0F0"/>
<path d="M15 26 L26 21" stroke="#000" stroke-width="0.7"/>
</svg>
<div class="a lab" style="left:695px;top:236px">Почта</div>
<svg class="a ic" style="left:267px;top:274px;overflow:visible" width="32" height="32" viewBox="0 0 32 32">
<path d="M0.5 2 Q0.5 1 2 1 H8 L10 3 H13 V18.5 H0.5z" fill="url(#gYel)" stroke="#D0A040" stroke-width="0.7"/>
<path d="M8 3 L19 2 L22.5 13 L11 14.5z" fill="#D8E8FF" stroke="#A0B0D0" stroke-width="0.6"/>
<path d="M10 8 L21 7 L22.5 13 L11 14.5z" fill="#A8D0F8"/>
<path d="M6 16 L14 13 L27 15 L29.5 21 L29 24 L21 28 L6.5 24z" fill="#E0E0E0" stroke="#8A8A8A" stroke-width="0.8"/>
<path d="M6.5 16.5 L14 13.5 L27 15.5 L29 20.5 L20 23z" fill="#F4F4F4"/>
<path d="M6.5 16.5 L20 23 V28 L6.5 24z" fill="#D0D0D0"/>
<path d="M19.5 25.5 L30 22.5 L31 26 L21 29.5z" fill="#D8D8DC" stroke="#808088" stroke-width="0.6"/>
<path d="M20 25.5 L29.5 22.8" stroke="#404048" stroke-width="1"/>
<rect x="27" y="19.5" width="1.5" height="1.2" fill="#40D040"/>
</svg>
<div class="a lab" style="left:245px;top:311px">Принтеры и<br>факсы</div>
<svg class="a ic" style="left:342px;top:274px;overflow:visible" width="32" height="32" viewBox="0 0 32 32">
<path d="M6 6 L18 3 L22.5 17 L11 20z" fill="#D8D8E8" stroke="#9898B8" stroke-width="0.7"/>
<path d="M8 7 L17.5 4.5 L21.5 16 L12 18.5z" fill="url(#gScreen)"/>
<path d="M13 20 L21 17.5 L23.5 24 Q23 29 17 29.5 L14 28z" fill="#9494D8" stroke="#6A6AB0" stroke-width="0.6"/>
<path d="M15 21 L20 19.5 L21.5 24" stroke="#C8C8F0" stroke-width="1" fill="none"/>
<path d="M18 6 Q17.5 1 24 0.8 Q30.5 1 30.5 6 Q30 11 25 11.5 L20.5 15 L21.5 11 Q18 10 18 6z" fill="#F8D880" stroke="#D89020" stroke-width="0.9"/>
<path d="M20.5 4 h7 M20.5 6 h7 M20.5 8 h6" stroke="#E8A840" stroke-width="0.7"/>
<path d="M0.5 30.5 Q0.5 24 7 23.5 Q13.5 24 13.5 30.5z" fill="#30B030" stroke="#1A6A1A" stroke-width="0.7"/>
<path d="M5.5 23.6 L7 28 L8.5 23.6z" fill="#fff"/>
<ellipse cx="7" cy="17.5" rx="5.3" ry="6" fill="#F8A050" stroke="#B06020" stroke-width="0.6"/>
<path d="M1.7 16 Q1.8 11.2 7 11.3 Q12.2 11.2 12.3 16 Q9.5 13.5 7 13.7 Q4.3 13.5 1.7 16z" fill="#D8C070" stroke="#B09040" stroke-width="0.4"/>
</svg>
<div class="a lab" style="left:320px;top:311px">Речь</div>
<svg class="a ic" style="left:417px;top:274px;overflow:visible" width="32" height="32" viewBox="0 0 32 32">
<circle cx="18.5" cy="13" r="12" fill="url(#gGlobe)"/>
<path d="M10 5 Q15 0.5 21 1.2 Q17 5 14 8z" fill="#30A040"/>
<path d="M22 4 Q28 7 30 13 Q30 18 27 21 L24 18 L22 11z" fill="#1E9030"/>
<path d="M16 20 L21 18 L20 24z" fill="#1E9030"/>
<path d="M1 6 L17 4.5 L18 21 L2.5 22z" fill="#C8C8E0" stroke="#8080A8" stroke-width="0.7"/>
<path d="M3 7.5 L16 6.5 L16.7 19.5 L4 20.5z" fill="url(#gScreen)"/>
<path d="M6.5 14.5 L10 19 L14 8" stroke="#B01010" stroke-width="1.8" fill="none"/>
<rect x="9" y="20" width="5" height="5" fill="#C0C0E0"/>
<ellipse cx="10" cy="25.8" rx="8.5" ry="4" fill="#E4E4F4" stroke="#9090B8" stroke-width="0.7"/>
</svg>
<div class="a lab" style="left:395px;top:311px">Свойства<br>обозревателя</div>
<svg class="a ic" style="left:492px;top:274px;overflow:visible" width="32" height="32" viewBox="0 0 32 32">
<path d="M1 4 Q1 2.5 3 2.5 H10 L12 5 H24 V10 L2 26z" fill="url(#gYel)" stroke="#D8A840" stroke-width="0.8"/>
<path d="M1 4 V26" stroke="#D8A840" stroke-width="0.8"/>
<path d="M6 13.5 L30 8 L25 23 L1.5 27.5z" fill="url(#gYel2)" stroke="#D8A840" stroke-width="0.8"/>
<path d="M12 15.5 L16 21 L21 8" stroke="#B01818" stroke-width="1.8" fill="none"/>
</svg>
<div class="a lab" style="left:470px;top:311px">Свойства<br>папки</div>
<svg class="a ic" style="left:567px;top:274px;overflow:visible" width="32" height="32" viewBox="0 0 32 32">
<circle cx="14.5" cy="13" r="12.3" fill="url(#gGlobe2)"/>
<path d="M4.5 7 Q9 1.5 16 1.2 Q18 4 16 8 L13 12 L9 13 L4 11z" fill="#78C838"/>
<path d="M9 3.5 Q12 2.5 14 4 L12 7 L9 6z" fill="#C8E8A0" opacity="0.8"/>
<path d="M19.5 3 Q25.5 6.5 26.8 13 L25.5 18 L21 16.5 L19 10z" fill="#1A7A20"/>
<path d="M11 15 L16 13.5 L17 20 L13.5 23z" fill="#2A8A28"/>
<path d="M17.5 17.5 L24 15.3 L28 20 L21.5 23z" fill="#E4E4F0" stroke="#6A6A90" stroke-width="0.9"/>
<path d="M23 20.5 L25.5 19.5" stroke="#9A9AB8" stroke-width="0.8"/>
<path d="M22.5 23 L25 25.5 Q26.5 27.5 22 28 L15.5 28.3 L18 30.5" stroke="#C0C0D8" stroke-width="2" fill="none"/>
</svg>
<div class="a lab" style="left:545px;top:311px">Сетевые<br>подключения</div>
<svg class="a ic" style="left:642px;top:274px;overflow:visible" width="32" height="32" viewBox="0 0 32 32">
<path d="M17 3 L25 1.5 L31 3 V23 L24 25 L17 23z" fill="#E0E0F4" stroke="#8888B8" stroke-width="0.7"/>
<path d="M24 4 L31 3 V23 L24 25z" fill="#B0B0E4"/>
<path d="M25.5 7 h4 M25.5 10 h4 M25.5 13 h4" stroke="#8080C0" stroke-width="0.8"/>
<rect x="28.5" y="19" width="1.5" height="1.5" fill="#40E040"/>
<path d="M1 3 L17.5 1.5 L19 19 L2.5 21z" fill="#C8C8E0" stroke="#8080A8" stroke-width="0.7"/>
<path d="M3 5 L17 3.5 L18 18 L4.5 19.5z" fill="url(#gScreen)"/>
<path d="M6.5 12.5 L10.5 17.5 L15 5" stroke="#B01010" stroke-width="1.8" fill="none"/>
<rect x="9" y="19" width="5" height="5" fill="#C0C0E0"/>
<ellipse cx="10" cy="25.3" rx="9" ry="4.3" fill="#E4E4F4" stroke="#9090B8" stroke-width="0.7"/>
</svg>
<div class="a lab" style="left:620px;top:311px">Система</div>
<svg class="a ic" style="left:717px;top:274px;overflow:visible" width="32" height="32" viewBox="0 0 32 32">
<path d="M0.5 2 Q0.5 1 2 1 H9 L11 3 H16 V18.5 H0.5z" fill="url(#gYel)" stroke="#D0A040" stroke-width="0.7"/>
<path d="M15 4 L27 2.5 L31 4 V13.5 L27 15 L15 14z" fill="#E8E8E8" stroke="#707070" stroke-width="0.7"/>
<path d="M16 5 V13 M18 5 V13 M20 5 V13" stroke="#B8B8B8" stroke-width="0.7"/>
<circle cx="26" cy="9.5" r="3.8" fill="#404048" stroke="#909090" stroke-width="0.8"/>
<circle cx="26" cy="9.5" r="1.3" fill="#2060E0"/>
<path d="M6 12.5 L10 11.5 L30.5 19 L28 21z" fill="#E8E8F8" stroke="#6A6AB8" stroke-width="0.8"/>
<path d="M2.5 22 L7.5 19.5 L30 19.5 L30 26 L17 31 L3 27z" fill="#E8E8F0" stroke="#8A8AB0" stroke-width="0.8"/>
<path d="M7 20.5 L29 20.5 L18 25 L5 23z" fill="#5AA8F8"/>
<rect x="13.5" y="27.5" width="1.3" height="1.5" fill="#30C030"/>
</svg>
<div class="a lab" style="left:695px;top:311px">Сканеры и<br>камеры</div>
<svg class="a ic" style="left:267px;top:349px;overflow:visible" width="32" height="32" viewBox="0 0 32 32">
<circle cx="12" cy="3.8" r="3.3" fill="#0E7A0E"/>
<path d="M9.5 7 H18.5 V11 H14 V16.5 H21 L25 21 L28 18.5 L30 21 L25.5 26 L20.5 20.5 H9.5z" fill="url(#gGreen)"/>
<path d="M10.63 9.35 A9.6 9.6 0 1 0 19.86 24.71" stroke="url(#gGreen)" stroke-width="4.2" fill="none"/>
</svg>
<div class="a lab" style="left:245px;top:386px">Специальные<br>возможности</div>
<svg class="a ic" style="left:342px;top:349px;overflow:visible" width="32" height="32" viewBox="0 0 32 32">
<rect x="2.5" y="0" width="2.5" height="6" rx="1" fill="#303048"/>
<rect x="3" y="3" width="1.8" height="2.5" fill="#2040C0"/>
<path d="M1 6 Q1 5 3 5 L12 5.5 Q13 6 13 8 L12.5 29 L3 30 Q1.5 30 1.5 28z" fill="#A8A8B0" stroke="#404048" stroke-width="0.8"/>
<path d="M1.8 7 V28" stroke="#E0E0E8" stroke-width="1.3"/>
<path d="M5 9.5 L11.5 9.5 L11.5 18 L5 18z" fill="#60D040"/>
<path d="M5 9.5 L11.5 9.5 L5 15z" fill="#90E070"/>
<g fill="#303038"><rect x="6" y="19.5" width="1.5" height="1"/><rect x="9" y="19.5" width="1.5" height="1"/><rect x="6" y="22" width="1.5" height="1"/><rect x="9" y="22" width="1.5" height="1"/><rect x="6" y="24.5" width="1.5" height="1"/><rect x="9" y="24.5" width="1.5" height="1"/><rect x="6" y="27" width="1.5" height="1"/><rect x="9" y="27" width="1.5" height="1"/></g>
<path d="M13 18.5 L17 16.5 L30.5 21 L30.5 24.5 L27 27.5 L14 29.5z" fill="#C8C8F0" stroke="#6060A0" stroke-width="0.8"/>
<path d="M13.5 19 L17 16.5 L30.5 21 L27 23z" fill="#E8E8FF"/>
<path d="M14 23 L27 23 L27 27.5 L14 29z" fill="#9898E0"/>
<circle cx="17.5" cy="26.5" r="1.2" fill="#F05010"/><circle cx="21" cy="25.8" r="1.2" fill="#F08010"/><circle cx="24" cy="24.8" r="1" fill="#E03010"/>
<rect x="26.5" y="22" width="3" height="2" fill="#50C050"/>
</svg>
<div class="a lab" style="left:320px;top:386px">Телефон и<br>модем</div>
<svg class="a ic" style="left:417px;top:349px;overflow:visible" width="32" height="32" viewBox="0 0 32 32">
<path d="M1 3 L17 1 L24 3 L23 29 L6 30 L1 28z" fill="#F0F4FC" stroke="#A0A8C8" stroke-width="0.7"/>
<path d="M2 2.5 L17 1 L23 3.5 L8 6z" fill="#A8D0F8"/>
<path d="M6 7.5 L23 5 L23 14 L6 17z" fill="#8AC4F8"/>
<path d="M17 1.5 L24 2 L22.5 7 L17.5 6z" fill="#FFFFFF" stroke="#A0A8C8" stroke-width="0.5"/>
<rect x="3" y="13" width="1.5" height="3" fill="#2A78E0"/>
<rect x="8" y="16" width="4.5" height="3.5" fill="#F07020"/>
<rect x="8" y="19.5" width="4.5" height="7.5" fill="#20A030"/>
<circle cx="20.5" cy="19.5" r="9.5" fill="#C0C0F4" stroke="#7A7AB8" stroke-width="0.8"/>
<path d="M20.5 19.5 L14 12 A9.5 9.5 0 0 1 23 10.3z" fill="#E8E8FF"/>
<path d="M20.5 19.5 L27 27 A9.5 9.5 0 0 1 18 28.7z" fill="#E0E0FF"/>
<circle cx="20.5" cy="19.5" r="2.4" fill="#fff" stroke="#6A6AB0" stroke-width="0.9"/>
</svg>
<div class="a lab" style="left:395px;top:386px">Установка и<br>удаление<span class="dots">...</span></div>
<svg class="a ic" style="left:492px;top:349px;overflow:visible" width="32" height="32" viewBox="0 0 32 32">
<path d="M1 5.5 L12 2 L23 3.5 L17 9.5z" fill="#1A9A1A" stroke="#0A200A" stroke-width="0.9"/>
<path d="M6 5 h3 M11 4 h3 M8 6.5 h5" stroke="#B0E0B0" stroke-width="0.8"/>
<path d="M17 9.5 L23 3.5 L30 4.5 L30 8.5 L24 10z" fill="#E8E8E8" stroke="#303030" stroke-width="0.8"/>
<path d="M1 11 L6 9 L16 8 L27 11 L27 16.5 L12 19.5 L1 14.5z" fill="#A0A0EC" stroke="#2A2A70" stroke-width="0.8"/>
<path d="M1.5 11 L6 9 L16 8 L26.5 11 L12 14.5z" fill="#D0D0FF"/>
<path d="M12 14.5 L26.5 11 V16.5 L12 19z" fill="#8888D8"/>
<path d="M14 17.2 L22 15.2" stroke="#F05020" stroke-width="1.8"/>
<rect x="24.5" y="12.5" width="1.5" height="1.5" fill="#50D050"/>
<path d="M14 20 Q5 19.5 3 22 Q3 25.5 15 24.5" stroke="#A8A8A8" stroke-width="2" fill="none"/>
<path d="M16 24.5 L28 22.5 L30.5 27.5 L19 30.5z" fill="#C8C8D8" stroke="#202030" stroke-width="0.9"/>
<path d="M18.5 27 L28.5 25.3" stroke="#F0C020" stroke-width="1.6"/>
<path d="M19.5 28.8 L24 28" stroke="#D02010" stroke-width="1.2"/>
</svg>
<div class="a lab" style="left:470px;top:386px">Установка<br>оборудова<span class="dots">...</span></div>
<svg class="a ic" style="left:567px;top:349px;overflow:visible" width="32" height="32" viewBox="0 0 32 32">
<path d="M13.5 24.5 Q13.5 17 21 16.5 Q29 17 29.5 24.5z" fill="#40B840" stroke="#1A7A1A" stroke-width="0.7"/>
<path d="M19 16.8 L21 21 L23 16.8z" fill="#fff"/>
<ellipse cx="21" cy="10" rx="6" ry="6.8" fill="#F8A050" stroke="#C87030" stroke-width="0.6"/>
<path d="M15 9.5 Q15 3 21 3 Q27 3 27 9.5 Q25 6 21 6.5 Q17 6 15 9.5z" fill="#D8B860"/>
<circle cx="8.2" cy="10.5" r="7.5" fill="#202020"/>
<ellipse cx="9.5" cy="12" rx="4.8" ry="5.5" fill="#E07028"/>
<path d="M1 26 Q1 18 8.5 17.5 Q16 18 16.5 26z" fill="#3A70E8" stroke="#1A3A98" stroke-width="0.7"/>
<path d="M6.5 17.8 L9 22 L11 17.8z" fill="#A8D8F8"/>
</svg>
<div class="a lab" style="left:545px;top:386px">Учетные<br>записи пол<span class="dots">...</span></div>
<svg class="a ic" style="left:642px;top:349px;overflow:visible" width="32" height="32" viewBox="0 0 32 32">
<path d="M15 0.5 Q20 3.5 27.5 5 Q28.5 20 15 30.5 Q1.5 20 2.5 5 Q10 3.5 15 0.5z" fill="#E0E0F0" stroke="#1A1A50" stroke-width="1.1"/>
<path d="M14.5 3.5 Q10 6 4.5 6.5 Q4.5 12 5.5 16 H14.5z" fill="#F05A1A"/>
<path d="M15.5 3.5 Q20 6 25.5 6.5 Q25.5 12 24.5 16 H15.5z" fill="#6AC020"/>
<path d="M5.5 16 Q8 23 14.5 28 V16z" fill="#1E5AD0"/>
<path d="M24.5 16 Q22 23 15.5 28 V16z" fill="#F0C020"/>
</svg>
<div class="a lab" style="left:620px;top:386px">Центр<br>обеспечен<span class="dots">...</span></div>
<svg class="a ic" style="left:717px;top:349px;overflow:visible" width="32" height="32" viewBox="0 0 32 32">
<path d="M17.5 13 L26 0.5 L28 1 L28 23 L24 23z" fill="#30C030"/>
<path d="M26 0.5 L28 1 L28 23 L26.5 23z" fill="#108A10"/>
<path d="M1 9 Q1 7 3 7 H10 L12 9 H20 V14 L2 29.5z" fill="url(#gYel)" stroke="#D8A840" stroke-width="0.8"/>
<path d="M1 8 V29" stroke="#D8A840" stroke-width="0.8"/>
<path d="M6 17 L29.5 12 L25 27.5 L1.5 30.5z" fill="url(#gYel2)" stroke="#D8A840" stroke-width="0.8"/>
<path d="M10 26 L16.5 16.5 L19 25 M13 22.5 L18 22" stroke="#C8A040" stroke-width="1.8" fill="none"/>
</svg>
<div class="a lab" style="left:695px;top:386px">Шрифты</div>
<svg class="a ic" style="left:267px;top:424px;overflow:visible" width="32" height="32" viewBox="0 0 32 32">
<path d="M1 3 L18 1.5 L19.5 19 L2.5 21z" fill="#C8C8E0" stroke="#7878A8" stroke-width="0.7"/>
<path d="M2.5 5 L17.5 3.5 L18.5 18 L4 19.5z" fill="url(#gScreen)"/>
<path d="M9 19.5 L14 19 L14.5 23.5 L9.5 24z" fill="#B8B8D8"/>
<ellipse cx="10" cy="25.3" rx="9" ry="4.3" fill="#E8E8F4" stroke="#8888B8" stroke-width="0.7"/>
<path d="M17 14 L30.5 22.5" stroke="#0A5A0A" stroke-width="4" stroke-linecap="round"/>
<path d="M17 14 L30.5 22.5" stroke="#40B030" stroke-width="2.6" stroke-linecap="round"/>
<path d="M17.5 13.5 L29 20.8" stroke="#90E070" stroke-width="0.8"/>
<path d="M12 11 L17.5 13 L16 16.5 L10.5 14.5z" fill="#F0F0F8" stroke="#8080A0" stroke-width="0.5"/>
<path d="M7.5 8.5 L13 6 L15 11.5 L10 13.5z" fill="#E8B030" stroke="#906018" stroke-width="0.6"/>
<path d="M9 9 L13 7.5" stroke="#F8E090" stroke-width="1"/>
</svg>
<div class="a lab" style="left:245px;top:461px">Экран</div>
<svg class="a ic" style="left:342px;top:424px;overflow:visible" width="32" height="32" viewBox="0 0 32 32">
<path d="M7.5 8 Q1.5 7 0.8 10 Q0.8 13.5 7 13" stroke="#A0A0A0" stroke-width="2" fill="none"/>
<path d="M19 12 Q26 9.5 26.5 14 V17" stroke="#A0A0A0" stroke-width="2" fill="none"/>
<path d="M7.5 3 Q7.5 1 13 1 Q19 1 19 3 V19.5 Q19 21.5 13 21.5 Q7.5 21.5 7.5 19.5z" fill="url(#gBatt)" stroke="#8080A8" stroke-width="0.8"/>
<path d="M7.9 5 Q13 6.5 18.6 5 V10.5 Q13 12 7.9 10.5z" fill="#F8A040"/>
<path d="M13.5 5.9 Q17 5.6 18.6 5 V10.5 Q17 11.2 13.5 11.4z" fill="#C83A10"/>
<ellipse cx="13" cy="3" rx="5" ry="1.8" fill="#FFFFFF" stroke="#B8B8C8" stroke-width="0.5"/>
<path d="M16.5 21 Q16.5 15.5 24 15.5 Q31 15.5 31 20 L30.5 23 Q27 26 21 25.5 Q16.5 24.5 16.5 21z" fill="#A8A8F0" stroke="#4A4A98" stroke-width="0.9"/>
<path d="M18 22.5 Q24 25 30 21.5" stroke="#7A7AD0" stroke-width="1.5" fill="none"/>
<path d="M19.8 21.5 L18.8 26" stroke="#6A5010" stroke-width="2.4"/><path d="M19.8 21.5 L18.8 26" stroke="#F0C030" stroke-width="1.3"/>
<path d="M25.8 23 L25.2 28.5" stroke="#6A5010" stroke-width="2.4"/><path d="M25.8 23 L25.2 28.5" stroke="#F0C030" stroke-width="1.3"/>
</svg>
<div class="a lab" style="left:320px;top:461px">Электропи<span class="dots">...</span></div>
<svg class="a ic" style="left:417px;top:424px;overflow:visible" width="32" height="32" viewBox="0 0 32 32">
<path d="M14 0.5 Q6 4 5 13 Q5 21 12 24.5" stroke="#A8A8D0" stroke-width="1.6" fill="none"/>
<circle cx="16.5" cy="13.2" r="10.5" fill="url(#gGlobe)"/>
<path d="M8 8 Q12 3 19 3.5 Q20 7 17 10 L16 14 L10 13z" fill="#30A030"/>
<path d="M15 15 L19 16 L18 20 L15 21z" fill="#30A030"/>
<path d="M22 5 Q26 8 27 13 L25 18 L21 14z" fill="#20902A"/>
<rect x="14" y="23" width="4.5" height="3" fill="#B0B0D0"/>
<ellipse cx="16" cy="27.5" rx="8.5" ry="2.6" fill="#E8E8F8" stroke="#8080B0" stroke-width="0.8"/>
</svg>
<div class="a lab" style="left:395px;top:461px">Язык и<br>региональ<span class="dots">...</span></div>

<div id="status" class="a"></div>
<div class="a txt" style="left:5px;top:515px">Объектов: 31</div>
<div class="a" style="left:484px;top:511px;width:2px;height:18px;background:linear-gradient(90deg,#C8C4B0 0,#C8C4B0 1px,#fff 1px)"></div>
<div class="a" style="left:562px;top:511px;width:2px;height:18px;background:linear-gradient(90deg,#C8C4B0 0,#C8C4B0 1px,#fff 1px)"></div>
<div class="a" style="left:762px;top:518px;width:12px;height:12px;background-image:radial-gradient(circle,#B0AC98 0.9px,transparent 1.1px);background-size:4px 4px;clip-path:polygon(100% 0,100% 100%,0 100%)"></div>
<div id="bottom" class="a"></div>
</body></html>
